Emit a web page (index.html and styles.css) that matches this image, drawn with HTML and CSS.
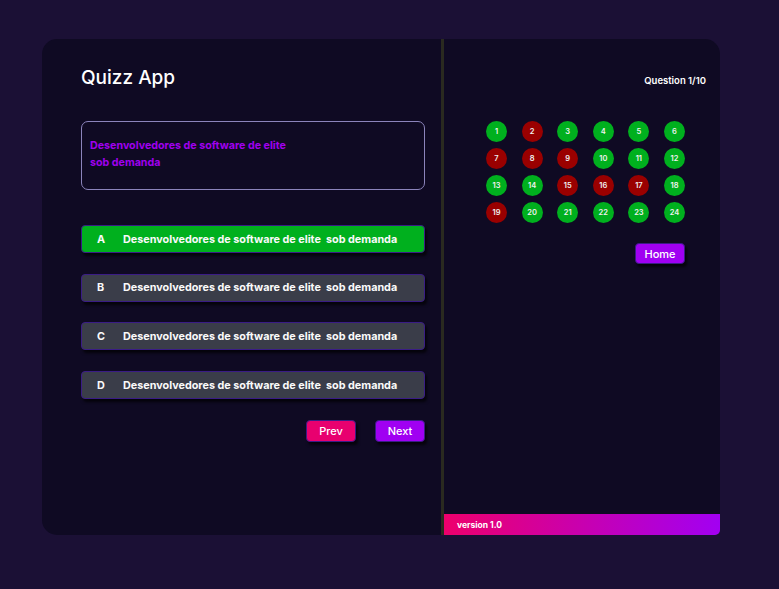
FILE: index.html
```html
<!DOCTYPE html>
<html lang="pt">
<head>
<meta charset="utf-8">
<title>Quizz App</title>
<link rel="stylesheet" href="styles.css">
</head>
<body>
<div class="card">
  <section class="left">
    <h1 class="title">Quizz App</h1>
    <div class="question">
      <p>Desenvolvedores de software de elite<br>sob demanda</p>
    </div>
    <div class="options">
      <div class="option correct"><span class="letter">A</span><span class="text">Desenvolvedores de software de elite&nbsp; sob demanda</span></div>
      <div class="option"><span class="letter">B</span><span class="text">Desenvolvedores de software de elite&nbsp; sob demanda</span></div>
      <div class="option"><span class="letter">C</span><span class="text">Desenvolvedores de software de elite&nbsp; sob demanda</span></div>
      <div class="option"><span class="letter">D</span><span class="text">Desenvolvedores de software de elite&nbsp; sob demanda</span></div>
    </div>
    <div class="nav">
      <button class="btn prev">Prev</button>
      <button class="btn next">Next</button>
    </div>
  </section>
  <div class="divider"></div>
  <section class="right">
    <div class="counter">Question 1/10</div>
    <div class="grid">
      <span class="dot g">1</span><span class="dot r">2</span><span class="dot g">3</span><span class="dot g">4</span><span class="dot g">5</span><span class="dot g">6</span>
      <span class="dot r">7</span><span class="dot r">8</span><span class="dot r">9</span><span class="dot g">10</span><span class="dot g">11</span><span class="dot g">12</span>
      <span class="dot g">13</span><span class="dot g">14</span><span class="dot r">15</span><span class="dot r">16</span><span class="dot r">17</span><span class="dot g">18</span>
      <span class="dot r">19</span><span class="dot g">20</span><span class="dot g">21</span><span class="dot g">22</span><span class="dot g">23</span><span class="dot g">24</span>
    </div>
    <div class="home-row"><button class="btn home">Home</button></div>
    <div class="spacer"></div>
    <footer class="footer">version 1.0</footer>
  </section>
</div>
</body>
</html>
```
FILE: styles.css
```css
* { box-sizing: border-box; }
html, body { margin: 0; height: 100%; }
body {
  background: #1b1035;
  font-family: Inter, "Noto Sans", sans-serif;
  color: #fff;
  padding: 39px 59px 54px 42px;
}
.card {
  height: 496px;
  background: #0f0a23;
  border-radius: 15px;
  display: flex;
}
.left {
  width: 399px;
  padding: 27px 16px 0 39px;
  display: flex;
  flex-direction: column;
}
.title {
  margin: 0;
  font-size: 19px;
  line-height: 24px;
  font-weight: 500;
  color: #fff;
}
.question {
  margin-top: 31px;
  height: 69px;
  border: 1.5px solid #8b84bb;
  border-radius: 7px;
  padding: 14.5px 8px 0;
}
.question p {
  margin: 0;
  font-size: 10.7px;
  line-height: 17px;
  font-weight: 700;
  color: #a000ee;
}
.options {
  margin-top: 35px;
  display: flex;
  flex-direction: column;
  gap: 20.7px;
}
.option {
  height: 28px;
  background: #3a3d49;
  border: 1px solid #3a1c86;
  border-radius: 4px;
  display: flex;
  align-items: center;
  box-shadow: 2px 3px 3px rgba(0,0,0,0.7);
  font-size: 10.8px;
  font-weight: 700;
  color: #fafafa;
}
.option.correct { background: #00b01e; }
.letter { width: 41px; padding-left: 15px; }
.text { white-space: nowrap; }
.nav {
  margin-top: 21px;
  display: flex;
  justify-content: flex-end;
  gap: 19px;
}
.btn {
  font-family: inherit;
  border: 1px solid #3a1c86;
  border-radius: 4px;
  color: #fff;
  font-size: 11px;
  font-weight: 500;
  width: 50px;
  height: 22px;
  padding: 0;
  box-shadow: 2px 3px 3px rgba(0,0,0,0.7);
}
.prev { background: #e8006f; }
.next, .home { background: #a000f2; }
.divider {
  width: 3px;
  background: #2a2a20;
}
.right {
  flex: 1;
  display: flex;
  flex-direction: column;
}
.counter {
  text-align: right;
  padding: 36px 14px 0 0;
  font-size: 9.5px;
  line-height: 12px;
  font-weight: 600;
}
.grid {
  margin: 34px 0 0 42px;
  width: 199px;
  display: grid;
  grid-template-columns: repeat(6, 21px);
  justify-content: space-between;
  row-gap: 6px;
}
.dot {
  width: 21px;
  height: 21px;
  border-radius: 50%;
  display: flex;
  align-items: center;
  justify-content: center;
  font-size: 7.5px;
  font-weight: 600;
  color: #f0f0f0;
}
.dot.g { background: #00b01e; }
.dot.r { background: #9a0000; }
.home-row {
  width: 241px;
  margin-top: 20px;
  display: flex;
  justify-content: flex-end;
}
.home { width: 50px; height: 21px; }
.spacer { flex: 1; }
.footer {
  height: 21px;
  background: linear-gradient(90deg, #ee006c, #a200f2);
  border-bottom-right-radius: 5px;
  font-size: 8.5px;
  font-weight: 700;
  padding-left: 13px;
  display: flex;
  align-items: center;
}
```
